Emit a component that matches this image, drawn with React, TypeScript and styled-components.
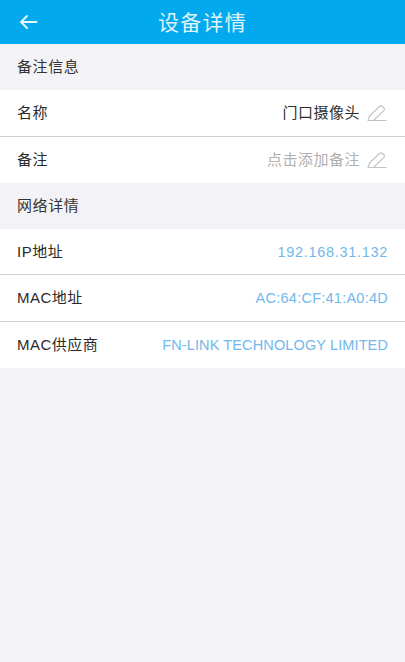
import React from "react";
import styled, { createGlobalStyle } from "styled-components";

const Global = createGlobalStyle`
  html, body { margin: 0; padding: 0; background: #f3f3f7; }
  body { font-family: "Liberation Sans", "Noto Sans CJK SC", sans-serif; }
`;

const Page = styled.div`
  width: 405px;
  height: 662px;
  overflow: hidden;
  background: #f3f3f7;
  display: flex;
  flex-direction: column;
`;

const Header = styled.header`
  height: 44px;
  background: #03a9ed;
  display: flex;
  align-items: center;
  justify-content: center;
  position: relative;
  flex: none;
`;

const BackButton = styled.div`
  position: absolute;
  left: 20px;
  top: 13px;
  width: 18px;
  height: 18px;
  display: flex;
`;

const Title = styled.h1`
  margin: 0 0 3px 0;
  font-family: "Noto Sans CJK SC", sans-serif;
  font-size: 21px;
  font-weight: 400;
  color: #dff3fc;
  letter-spacing: 1.2px;
  line-height: 40px;
`;

const SectionLabel = styled.div`
  height: 46.3px;
  padding: 0 17px 3px;
  box-sizing: border-box;
  display: flex;
  align-items: center;
  font-family: "Noto Sans CJK SC", sans-serif;
  font-size: 15px;
  letter-spacing: 0.6px;
  color: #333;
  flex: none;
`;

const Row = styled.div<{ $divider?: boolean }>`
  height: 46.3px;
  box-sizing: border-box;
  background: #fff;
  padding: 0 17px;
  display: flex;
  align-items: center;
  justify-content: space-between;
  border-bottom: ${(p) => (p.$divider ? "1px solid #cfcfd2" : "none")};
  flex: none;
`;

const Label = styled.span`
  margin-bottom: 3px;
  font-family: "Liberation Sans", "Noto Sans CJK SC", sans-serif;
  font-size: 15px;
  letter-spacing: 0.5px;
  color: #2a2a2a;
`;

const NoteValue = styled.span<{ $muted?: boolean }>`
  margin-bottom: 3px;
  font-family: "Noto Sans CJK SC", sans-serif;
  font-size: 15px;
  letter-spacing: 0.5px;
  color: ${(p) => (p.$muted ? "#b0b0b0" : "#2f2f2f")};
`;

const LinkValue = styled.span<{ $track: number }>`
  font-family: "Liberation Sans", sans-serif;
  font-size: 14.5px;
  letter-spacing: ${(p) => p.$track}px;
  color: #72b8ec;
`;

const EditGroup = styled.div`
  display: flex;
  align-items: center;
  gap: 7px;
  margin-right: 1px;
`;

const ArrowIcon = () => (
  <svg width="18" height="18" viewBox="0 0 18 18" fill="none">
    <path
      d="M16.5 9H1M7 3 1 9 7 15"
      stroke="#e6f6fd"
      strokeWidth="1.9"
      strokeLinecap="round"
      strokeLinejoin="round"
    />
  </svg>
);

const PenIcon = () => (
  <svg width="20" height="18" viewBox="0 0 20 18" fill="none">
    <path
      d="M1 16.5 2.5 12 12.5 2.5Q14 1.3 15.5 2.5L17 4Q18 5.2 17 6.3L7 16M1 16.5H19"
      stroke="#c2c2c2"
      strokeWidth="1.1"
      strokeLinejoin="round"
      strokeLinecap="round"
    />
  </svg>
);

export default function App() {
  return (
    <Page>
      <Global />
      <Header>
        <BackButton>
          <ArrowIcon />
        </BackButton>
        <Title>设备详情</Title>
      </Header>
      <SectionLabel>备注信息</SectionLabel>
      <Row $divider>
        <Label>名称</Label>
        <EditGroup>
          <NoteValue>门口摄像头</NoteValue>
          <PenIcon />
        </EditGroup>
      </Row>
      <Row>
        <Label>备注</Label>
        <EditGroup>
          <NoteValue $muted>点击添加备注</NoteValue>
          <PenIcon />
        </EditGroup>
      </Row>
      <SectionLabel>网络详情</SectionLabel>
      <Row $divider>
        <Label>IP地址</Label>
        <LinkValue $track={0.7}>192.168.31.132</LinkValue>
      </Row>
      <Row $divider>
        <Label>MAC地址</Label>
        <LinkValue $track={0.25}>AC:64:CF:41:A0:4D</LinkValue>
      </Row>
      <Row>
        <Label>MAC供应商</Label>
        <LinkValue $track={0.12}>FN-LINK TECHNOLOGY LIMITED</LinkValue>
      </Row>
    </Page>
  );
}
